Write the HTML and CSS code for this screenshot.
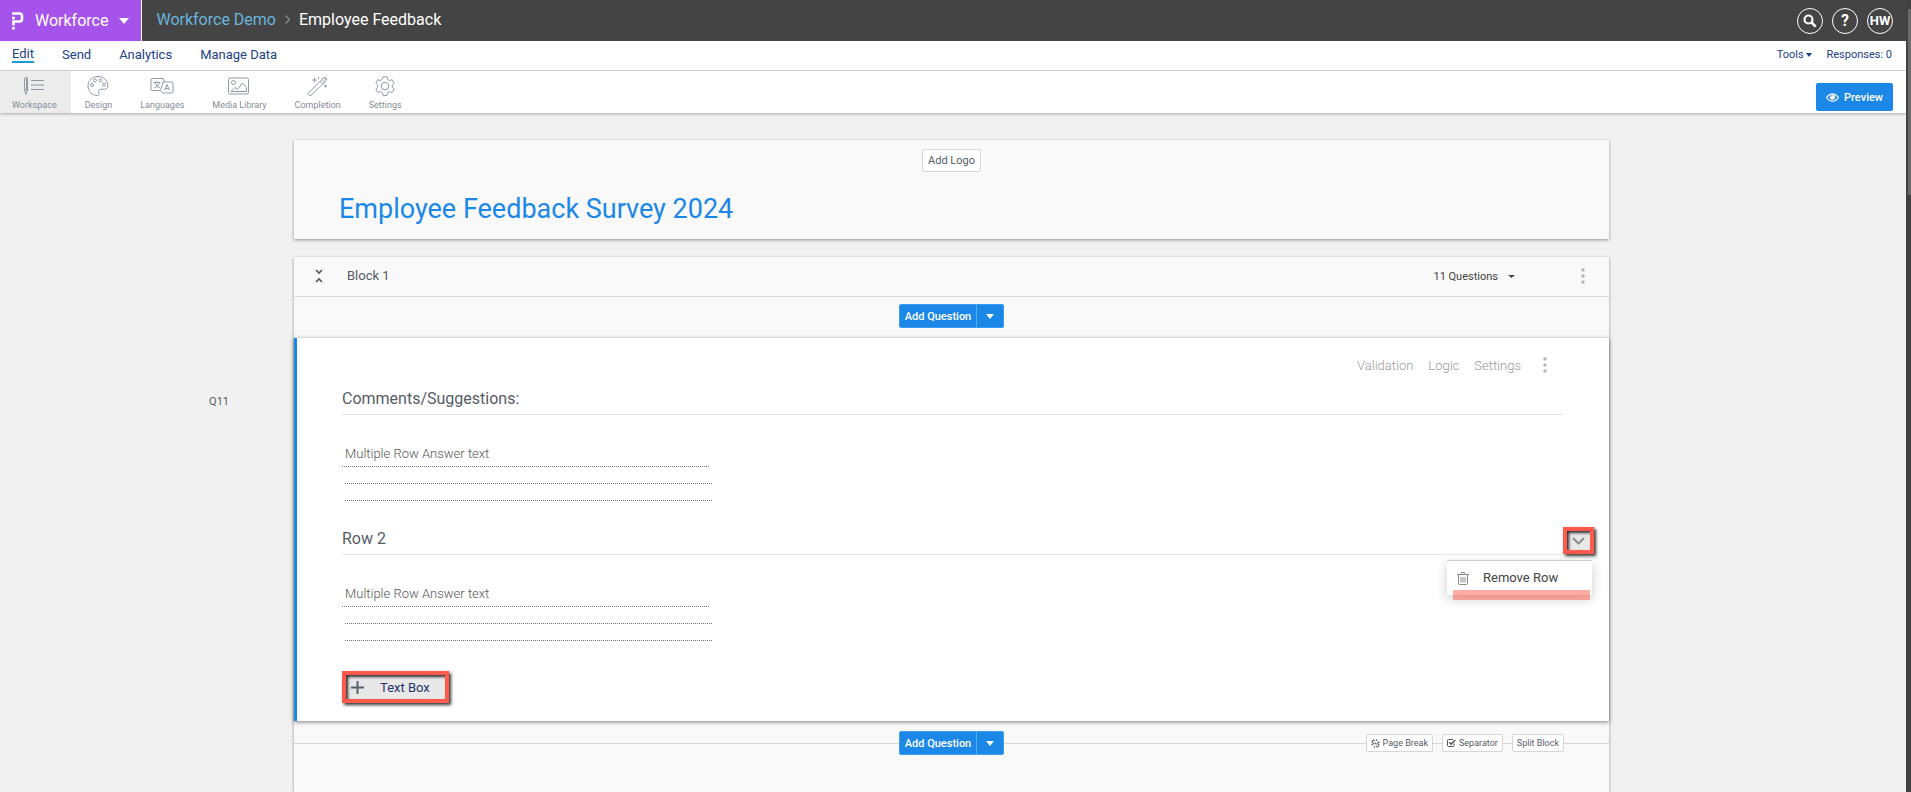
FILE: index.html
```html
<!DOCTYPE html>
<html lang="en">
<head>
    <meta charset="UTF-8">
    <meta name="viewport" content="width=device-width, initial-scale=1.0">
    <title>Employee Feedback - Workforce Demo</title>
    <link rel="stylesheet" href="styles.css">
</head>
<body>
    <div class="page">
        <header class="topbar">
            <button class="product" type="button">
                <svg width="13" height="18" viewBox="0 0 13 18" fill="none" stroke="#fff" stroke-width="2.600">
                    <path d="M1 1.500h7.500a2.500 2.500 0 0 1 2.500 2.500v3a2.500 2.500 0 0 1-2.500 2.500H2.500v4"/>
                    <path d="M1 6h3M1.200 16.300h2.600"/>
                </svg>
                <span>Workforce</span>
                <svg class="product-caret" width="10" height="6" viewBox="0 0 10 6"><path d="M0 0h10L5 6z" fill="#fff"/></svg>
            </button>
            <nav class="breadcrumb">
                <a href="#">Workforce Demo</a>
                <svg width="5" height="9" viewBox="0 0 5 9" fill="none" stroke="#8a8a8a" stroke-width="1.400"><path d="M.5.5l4 4-4 4"/></svg>
                <span>Employee Feedback</span>
            </nav>
            <div class="account">
                <button class="round" type="button" aria-label="Search">
                    <svg width="14" height="14" viewBox="0 0 14 14" fill="none" stroke="#fff"><circle cx="5.500" cy="5.500" r="4" stroke-width="2.200"/><path d="M8.500 8.500l4.200 4.200" stroke-width="2.600"/></svg>
                </button>
                <button class="round help" type="button">?</button>
                <button class="round" type="button">HW</button>
            </div>
        </header>

        <nav class="tabs">
            <a class="active" href="#">Edit</a>
            <a href="#">Send</a>
            <a href="#">Analytics</a>
            <a href="#">Manage Data</a>
            <div class="tabs-right">
                <a href="#">Tools <svg width="6" height="4" viewBox="0 0 6 4"><path d="M0 0h6L3 4z" fill="#1b4288"/></svg></a>
                <a href="#">Responses: 0</a>
            </div>
        </nav>

        <div class="toolbar">
            <a class="tool selected" href="#">
                <svg width="22" height="20" viewBox="0 0 22 20" fill="none" stroke="#9299a5">
                    <path d="M1.500 2.500q0-1 1.500-1t1.500 1V14L3 18.500 1.500 14zM1.500 14h3M3.500 2v12"/><path d="M8 4.500h13M8 9h13M8 13.500h13"/>
                </svg>
                Workspace
            </a>
            <a class="tool" href="#">
                <svg width="22" height="20" viewBox="0 0 22 20" fill="none" stroke="#9299a5">
                    <path d="M11 .5C5 .5 1 4.500 1 10s4 9.500 9.500 9.500c2 0 2-1.500 1.300-2.800-.9-2 .2-3.500 2.200-3.500h3.500c2.500 0 3.500-1.700 3.300-4C20.400 4 16.500.5 11 .5z"/>
                    <circle cx="5" cy="9" r="1.500"/><circle cx="8" cy="4.500" r="1.500"/><circle cx="13.500" cy="4.500" r="1.500"/><circle cx="17" cy="8.500" r="1.500"/>
                </svg>
                Design
            </a>
            <a class="tool" href="#">
                <svg width="24" height="20" viewBox="0 0 24 20" fill="none" stroke="#9299a5">
                    <path d="M10 14.500H2.500a1.500 1.500 0 0 1-1.500-1.500V4a1.500 1.500 0 0 1 1.500-1.500h10.800L14.500 6"/>
                    <path d="M13 6h9a1 1 0 0 1 1 1v9a1 1 0 0 1-1 1h-9.500l-2-2.500z"/>
                    <path d="M3.500 6.500h7M7 4.800v1.700M5 7q1.500 4 5 5M9.500 7Q8 11 4 12M14.500 14.500l2.500-6 2.500 6M15.500 12.500h3"/>
                </svg>
                Languages
            </a>
            <a class="tool" href="#">
                <svg width="22" height="20" viewBox="0 0 22 20" fill="none" stroke="#9299a5">
                    <rect x=".5" y="2" width="20" height="16" rx="1.500"/><circle cx="5.500" cy="6.500" r="2"/>
                    <path d="M3 15.500l4-4 2.500 2L14.500 7l4 4.500v4z"/>
                </svg>
                Media Library
            </a>
            <a class="tool" href="#">
                <svg width="22" height="20" viewBox="0 0 22 20" fill="none" stroke="#9299a5">
                    <path d="M1 17.500L16.500 1.800q1.500-1.300 2.700 0t0 2.700L4 19.500q-1.300.5-2.300-.3t-.7-1.700zM13 5.200l2.700 2.800M15 3.500l2.500 2.500M16.800 2l2 2"/>
                    <path d="M7.500 1.500v5M5 4h5M18.500 8.500v3M17 10h3M11.500.8v2"/>
                </svg>
                Completion
            </a>
            <a class="tool" href="#">
                <svg width="20" height="20" viewBox="0 0 20 20" fill="none" stroke="#9299a5">
                    <path d="M8 .8h4l.7 2.700 1.800 1 2.700-.8 2 3.500-2 1.900v2l2 1.900-2 3.500-2.700-.8-1.800 1-.7 2.700H8l-.7-2.700-1.800-1-2.700.8-2-3.500 2-1.900v-2l-2-1.900 2-3.500 2.700.8 1.800-1z" stroke-linejoin="round"/>
                    <circle cx="10" cy="10" r="3.800"/>
                </svg>
                Settings
            </a>
            <button class="preview" type="button">
                <svg width="13" height="9" viewBox="0 0 13 9" fill="none" stroke="#fff"><path d="M.6 4.500Q3 .8 6.500.8t5.900 3.700Q10 8.200 6.500 8.200T.6 4.500z" stroke-width="1.200"/><circle cx="6.500" cy="4" r="2.600" fill="#fff" stroke="none"/><path d="M5 3.800q0-1.400 1.500-1.400" stroke="#1b87e6" stroke-width=".8"/></svg>
                Preview
            </button>
        </div>

        <main class="survey">
            <section class="card title-card">
                <button class="small-btn add-logo" type="button">Add Logo</button>
                <h1>Employee Feedback Survey 2024</h1>
            </section>

            <section class="card block">
                <div class="block-head">
                    <button class="icon-btn" type="button" aria-label="Collapse block">
                        <svg width="8" height="14" viewBox="0 0 8 14" fill="none" stroke="#555" stroke-width="1.600"><path d="M1 1l3 3 3-3M1 13l3-3 3 3"/></svg>
                    </button>
                    <h2>Block 1</h2>
                    <button class="count" type="button">11 Questions <svg width="7" height="3" viewBox="0 0 7 3"><path d="M0 0h7L3.500 3z" fill="#444"/></svg></button>
                    <button class="icon-btn" type="button" aria-label="Block options">
                        <svg width="4" height="16" viewBox="0 0 4 16" fill="#b5b5b5"><circle cx="2" cy="2" r="1.700"/><circle cx="2" cy="8" r="1.700"/><circle cx="2" cy="14" r="1.700"/></svg>
                    </button>
                </div>

                <div class="add-row">
                    <div class="split-btn">
                        <button type="button">Add Question</button>
                        <button type="button" aria-label="Question types"><svg width="8" height="5" viewBox="0 0 8 5"><path d="M0 0h8L4 5z" fill="#fff"/></svg></button>
                    </div>
                </div>

                <article class="question">
                    <span class="question-number">Q11</span>
                    <div class="question-menu">
                        <a href="#">Validation</a>
                        <a href="#">Logic</a>
                        <a href="#">Settings</a>
                        <button class="icon-btn" type="button" aria-label="Question options">
                            <svg width="4" height="16" viewBox="0 0 4 16" fill="#b5b5b5"><circle cx="2" cy="2" r="1.700"/><circle cx="2" cy="8" r="1.700"/><circle cx="2" cy="14" r="1.700"/></svg>
                        </button>
                    </div>

                    <div class="row-head">
                        <label for="answer1">Comments/Suggestions:</label>
                    </div>
                    <div class="answer">
                        <textarea id="answer1" rows="1" placeholder="Multiple Row Answer text"></textarea>
                        <div class="line"></div>
                        <div class="line"></div>
                    </div>

                    <div class="row-head">
                        <label for="answer2">Row 2</label>
                        <button class="row-toggle marked" type="button" aria-label="Row options">
                            <svg width="13" height="8" viewBox="0 0 13 8" fill="none" stroke="#8e8e8e" stroke-width="2"><path d="M1 1l5.500 5.500L12 1"/></svg>
                        </button>
                        <div class="row-menu">
                            <button type="button">
                                <svg width="12" height="13" viewBox="0 0 12 13" fill="none" stroke="#8c8c8c"><path d="M0 2.500h12M3.500 2.500l1-2h3l1 2M1.500 2.500v9q0 1 1 1h7q1 0 1-1v-9M4 5v5.500M6 5v5.500M8 5v5.500"/></svg>
                                Remove Row
                            </button>
                            <div class="underline"></div>
                        </div>
                    </div>
                    <div class="answer">
                        <textarea id="answer2" rows="1" placeholder="Multiple Row Answer text"></textarea>
                        <div class="line"></div>
                        <div class="line"></div>
                    </div>

                    <button class="text-box marked" type="button">
                        <svg width="13" height="13" viewBox="0 0 13 13" stroke="#58606b" stroke-width="2"><path d="M6.500 0v13M0 6.500h13"/></svg>
                        Text Box
                    </button>
                </article>

                <div class="add-row divider">
                    <div class="split-btn">
                        <button type="button">Add Question</button>
                        <button type="button" aria-label="Question types"><svg width="8" height="5" viewBox="0 0 8 5"><path d="M0 0h8L4 5z" fill="#fff"/></svg></button>
                    </div>
                    <div class="break-btns">
                        <button class="small-btn" type="button">
                            <svg width="9" height="9" viewBox="0 0 8 8" fill="none" stroke="#666"><path d="M3.500 1.500q-1-1-2 0t0 2l1 1M4.500 6.500q1 1 2 0t0-2l-1-1M3 3l2 2M5 .3v1.400M7.700 3H6.300M.3 5h1.400M3 7.700V6.300"/></svg>
                            Page Break
                        </button>
                        <button class="small-btn" type="button">
                            <svg width="9" height="8" viewBox="0 0 9 8" fill="none" stroke="#555"><path d="M7 4.500v2q0 1-1 1H1.500q-1 0-1-1v-5q0-1 1-1H6"/><path d="M2.300 3.300l1.800 1.800L8.300 1" stroke-width="1.500"/></svg>
                            Separator
                        </button>
                        <button class="small-btn" type="button">Split Block</button>
                    </div>
                </div>
            </section>
        </main>
    </div>
    <div class="scroll-track"><div class="scroll-thumb"></div></div>
</body>
</html>
```
FILE: styles.css
```css
* {
    box-sizing: border-box;
}

body {
    margin: 0;
    min-height: 100vh;
    display: flex;
    background-color: #f1f1f1;
    color: #555c66;
    font-family: Roboto, sans-serif;
    font-size: 13px;
}

button {
    margin: 0;
    padding: 0;
    border: none;
    background: none;
    color: inherit;
    font: inherit;
    cursor: pointer;
}

a {
    color: inherit;
    text-decoration: none;
}

svg {
    flex-shrink: 0;
}

.page {
    flex: 1;
    display: flex;
    flex-direction: column;
}

/* Top bar */
.topbar {
    height: 41px;
    display: flex;
    align-items: center;
    background-color: #444;
    color: #fff;
    font-size: 16px;
}

.product {
    align-self: stretch;
    display: flex;
    align-items: center;
    gap: 11px;
    padding: 0 12px 0 11px;
    background-color: #a653ec;
    border-right: 1px solid #fff;
}

.breadcrumb {
    display: flex;
    align-items: center;
    gap: 9px;
    padding: 0 0 3px 14px;
}

.breadcrumb a {
    color: #69b5db;
}

.account {
    display: flex;
    gap: 9px;
    margin-left: auto;
    padding-right: 13px;
}

.round {
    width: 26px;
    height: 26px;
    display: flex;
    align-items: center;
    justify-content: center;
    border: 1px solid #fff;
    border-radius: 50%;
    font-size: 13px;
    font-weight: bold;
}

.help {
    font-size: 16px;
}

/* Navigation */
.tabs {
    height: 30px;
    display: flex;
    align-items: center;
    gap: 28px;
    padding: 0 14px 2px 12px;
    background-color: #fff;
    border-bottom: 1px solid #d9d9d9;
    color: #1b4288;
}

.active {
    border-bottom: 2px solid #1b9ad6;
    line-height: 14px;
}

.tabs-right {
    display: flex;
    gap: 14px;
    margin-left: auto;
    font-size: 11px;
}

.tabs-right svg {
    vertical-align: middle;
}

.toolbar {
    height: 42px;
    display: flex;
    padding-right: 13px;
    background-color: #fff;
    box-shadow: 0 1px 3px rgba(0, 0, 0, 0.3);
    color: #858c98;
    font-size: 9px;
}

.tool {
    display: flex;
    flex-direction: column;
    align-items: center;
    gap: 4px;
    padding: 5px 14px 0;
}

.selected {
    padding-left: 12px;
    background-color: #ececec;
}

.preview {
    align-self: flex-end;
    height: 28px;
    display: flex;
    align-items: center;
    gap: 5px;
    margin: 0 0 2px auto;
    padding: 0 10px;
    border-radius: 2px;
    background-color: #1b87e6;
    color: #fff;
    font-size: 11px;
    font-weight: 500;
}

/* Survey cards */
.survey {
    flex: 1;
    display: flex;
    flex-direction: column;
    gap: 18px;
    padding: 27px 297px 0 294px;
}

.card {
    background-color: #f9f9f9;
    box-shadow: 0 1px 3px rgba(0, 0, 0, 0.4);
}

.title-card {
    display: flex;
    flex-direction: column;
    padding: 9px 45px 12px;
}

.small-btn {
    height: 18px;
    display: flex;
    align-items: center;
    gap: 3px;
    padding: 0 4px;
    border: 1px solid #d6d6d6;
    border-radius: 2px;
    background-color: #fff;
    font-size: 9px;
}

.add-logo {
    align-self: center;
    height: 23px;
    padding: 0 5px;
    font-size: 11px;
}

h1 {
    margin: 19px 0 0;
    color: #1b87e6;
    font-size: 27px;
    font-weight: 400;
    line-height: 36px;
}

.block {
    flex: 1;
}

.block-head {
    height: 40px;
    display: flex;
    align-items: center;
    padding: 0 24px 2px 21px;
    border-bottom: 1px solid #dcdcdc;
}

.icon-btn {
    display: flex;
}

h2 {
    margin: 0 auto 0 24px;
    font-size: 13px;
    font-weight: 400;
}

.count {
    display: flex;
    align-items: center;
    gap: 10px;
    margin-right: 66px;
    padding-top: 2px;
    color: #444;
    font-size: 11px;
}

.add-row {
    height: 41px;
    display: grid;
    grid-template-columns: 1fr auto 1fr;
    align-items: center;
    padding-bottom: 3px;
}

.split-btn {
    grid-column: 2;
    height: 24px;
    display: flex;
    border: 1px solid #3d9cf0;
    border-radius: 2px;
    background-color: #1b87e6;
    color: #fff;
    font-size: 11px;
    font-weight: 500;
}

.split-btn button {
    display: flex;
    align-items: center;
    padding: 0 5px;
}

.split-btn button + button {
    padding: 0 9px;
    border-left: 1px solid #4fb0f5;
}

.divider {
    height: 44px;
    padding-bottom: 0;
    background: linear-gradient(#d6d6d6, #d6d6d6) center / 100% 1px no-repeat;
}

.break-btns {
    display: flex;
    gap: 9px;
    justify-self: end;
    padding-right: 45px;
}

/* Question */
.question {
    position: relative;
    padding: 19px 46px 18px 45px;
    border-left: 3px solid #1b87e6;
    background-color: #fff;
    box-shadow: 0 1px 4px rgba(0, 0, 0, 0.5);
}

.question-number {
    position: absolute;
    top: 57px;
    right: 100%;
    margin-right: 68px;
    font-size: 11px;
}

.question-menu {
    display: flex;
    align-items: center;
    justify-content: flex-end;
    gap: 15px;
    padding-right: 16px;
    color: #999;
    font-weight: 300;
}

.question-menu .icon-btn {
    margin-left: 7px;
}

.row-head {
    position: relative;
    height: 42px;
    display: flex;
    align-items: flex-end;
    padding-bottom: 5px;
    border-bottom: 1px solid #e6e6e6;
    font-size: 16px;
    line-height: 20px;
}

.answer {
    width: 370px;
    padding: 28px 0 12px;
}

textarea {
    display: block;
    width: 367px;
    height: 24px;
    padding: 3px;
    border: none;
    border-bottom: 1px dotted #777;
    background: none;
    font: 300 13px/16px Roboto, sans-serif;
    resize: none;
    overflow: hidden;
}

textarea::placeholder {
    color: #555;
}

.line {
    height: 17px;
    margin-left: 3px;
    border-bottom: 1px dotted #777;
}

.marked {
    display: flex;
    align-items: center;
    border: 4px solid #ff5a4c;
    background-color: #e8e8e8;
    box-shadow: 2px 2px 3px rgba(0, 0, 0, 0.8), inset 2px 2px 3px rgba(0, 0, 0, 0.8);
}

.row-toggle {
    position: absolute;
    left: 100%;
    bottom: 0;
    width: 31px;
    height: 27px;
    justify-content: center;
}

.row-menu {
    position: absolute;
    top: 47px;
    right: -29px;
    width: 145px;
    height: 35px;
    border-top: 1px solid #d0d0d0;
    background-color: #fff;
    box-shadow: 0 4px 12px rgba(0, 0, 0, 0.2);
    font-size: 13px;
}

.row-menu button {
    width: 100%;
    height: 34px;
    display: flex;
    align-items: center;
    gap: 14px;
    padding-left: 10px;
    color: #444;
}

.underline {
    position: absolute;
    top: 29px;
    left: 6px;
    right: 2px;
    height: 10px;
    background-color: rgba(255, 90, 76, 0.5);
}

.text-box {
    height: 32px;
    gap: 16px;
    margin-top: 18px;
    padding: 0 15px 0 5px;
    color: #24356f;
}

/* Scroll strip */
.scroll-track {
    width: 5px;
    padding: 9px 0 0 2px;
    background-color: #424242;
}

.scroll-thumb {
    height: 186px;
    background-color: #6b6b6b;
}
```
